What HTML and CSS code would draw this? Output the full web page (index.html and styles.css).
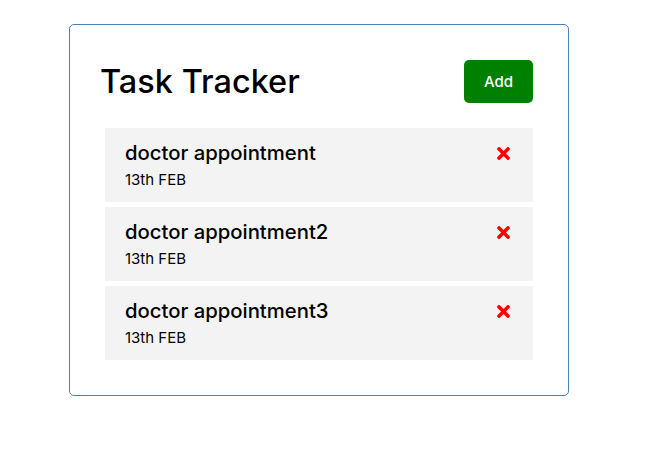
FILE: index.html
```html
<!DOCTYPE html>
<html lang="en">
<head>
<meta charset="utf-8">
<title>Task Tracker</title>
<link rel="stylesheet" href="styles.css">
</head>
<body>
<div class="container">
  <header class="header">
    <h1 class="title">Task Tracker</h1>
    <button class="btn">Add</button>
  </header>
  <div class="task">
    <h3 class="task-title">doctor appointment
      <svg class="del" viewBox="0 0 352 512" aria-hidden="true"><path d="M242.72 256l100.07-100.07c12.28-12.28 12.28-32.19 0-44.48l-22.24-22.24c-12.28-12.28-32.19-12.280-44.48 0L176 189.28 75.930 89.21c-12.28-12.28-32.19-12.28-44.48 0L9.21 111.45c-12.28 12.28-12.28 32.19 0 44.48L109.28 256 9.21 356.070c-12.28 12.28-12.28 32.19 0 44.48l22.24 22.24c12.28 12.28 32.2 12.28 44.48 0L176 322.72l100.07 100.07c12.28 12.28 32.2 12.28 44.48 0l22.24-22.24c12.28-12.28 12.28-32.19 0-44.48L242.72 256z"/></svg>
    </h3>
    <p class="task-date">13th FEB</p>
  </div>
  <div class="task">
    <h3 class="task-title">doctor appointment2
      <svg class="del" viewBox="0 0 352 512" aria-hidden="true"><path d="M242.72 256l100.07-100.07c12.28-12.28 12.28-32.19 0-44.48l-22.24-22.24c-12.28-12.28-32.19-12.280-44.48 0L176 189.28 75.930 89.21c-12.28-12.28-32.19-12.28-44.48 0L9.21 111.45c-12.28 12.28-12.28 32.19 0 44.48L109.28 256 9.21 356.070c-12.28 12.28-12.28 32.19 0 44.48l22.24 22.24c12.28 12.28 32.2 12.28 44.48 0L176 322.72l100.07 100.07c12.28 12.28 32.2 12.28 44.48 0l22.24-22.24c12.28-12.28 12.28-32.19 0-44.48L242.72 256z"/></svg>
    </h3>
    <p class="task-date">13th FEB</p>
  </div>
  <div class="task">
    <h3 class="task-title">doctor appointment3
      <svg class="del" viewBox="0 0 352 512" aria-hidden="true"><path d="M242.72 256l100.07-100.07c12.28-12.28 12.28-32.19 0-44.48l-22.24-22.24c-12.28-12.28-32.19-12.280-44.48 0L176 189.28 75.930 89.21c-12.28-12.28-32.19-12.28-44.48 0L9.21 111.45c-12.28 12.28-12.28 32.19 0 44.48L109.28 256 9.21 356.070c-12.28 12.28-12.28 32.19 0 44.48l22.24 22.24c12.28 12.28 32.2 12.28 44.48 0L176 322.72l100.07 100.07c12.28 12.28 32.2 12.28 44.48 0l22.24-22.24c12.28-12.28 12.28-32.19 0-44.48L242.72 256z"/></svg>
    </h3>
    <p class="task-date">13th FEB</p>
  </div>
</div>
</body>
</html>
```

FILE: styles.css
```css
* {
  box-sizing: border-box;
  margin: 0;
  padding: 0;
}

body {
  font-family: "Inter", "Noto Sans", sans-serif;
  background: #fff;
  color: #000;
}

.container {
  width: 500px;
  margin: 24px 0 0 69px;
  border: 1px solid steelblue;
  border-radius: 5px;
  padding: 30px;
  min-height: 300px;
}

.header {
  display: flex;
  justify-content: space-between;
  align-items: center;
  margin-bottom: 20px;
}

.title {
  font-size: 32.5px;
  line-height: 48px;
  font-weight: 500;
}

.btn {
  display: inline-block;
  background: green;
  color: #fff;
  border: none;
  padding: 10px 20px;
  margin: 5px;
  border-radius: 5px;
  font-family: inherit;
  font-size: 15px;
  line-height: 23px;
  font-weight: 500;
}

.task {
  background: #f3f3f3;
  margin: 5px;
  padding: 10px 20px;
}

.task-title {
  display: flex;
  align-items: center;
  justify-content: space-between;
  font-size: 20.3px;
  line-height: 30px;
  font-weight: 500;
}

.del {
  width: 13px;
  height: 19px;
  margin-right: 3px;
  fill: red;
}

.task-date {
  font-size: 15px;
  line-height: 24px;
}
```
